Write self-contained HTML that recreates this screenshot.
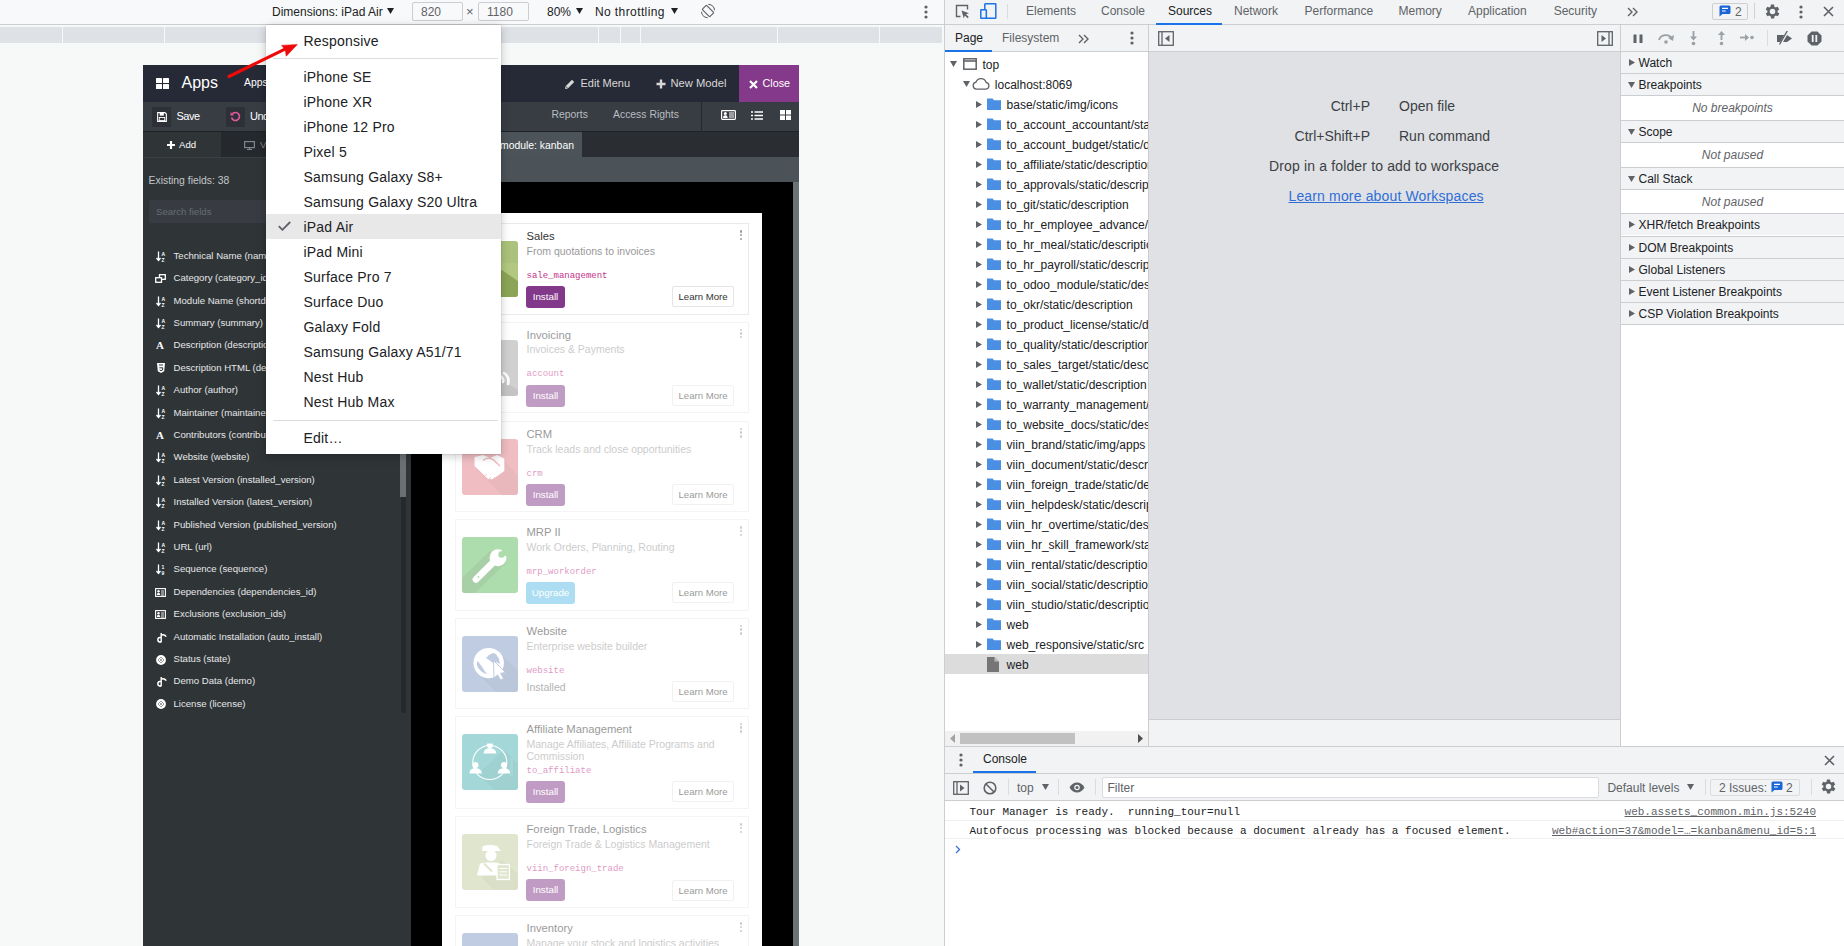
<!DOCTYPE html>
<html><head><meta charset="utf-8">
<style>
*{box-sizing:border-box}
html,body{margin:0;padding:0}
body{width:1844px;height:946px;overflow:hidden;position:relative;font-family:"Liberation Sans",sans-serif;background:#fff}
.a{position:absolute}
.t{position:absolute;white-space:pre;line-height:1}
#dm{left:0;top:0;width:944px;height:946px;background:#f7f8f8;overflow:hidden}
#tb{left:0;top:0;width:944px;height:25px;background:#f8f9fa;border-bottom:1px solid #cbcdd1}
.inp{position:absolute;top:2px;height:19px;border:1px solid #cbcdd1;border-radius:2px;background:#f8f9fa;font-size:12px;line-height:18px;color:#5f6368;padding:0 0 0 8px}
.mq{position:absolute;top:27px;height:16px;background:#dee1e6}
#od{left:143px;top:65px;width:656px;height:881px;background:#000;overflow:hidden}
.fl{font-size:9.6px;color:#e6e7e8}
.card{position:absolute;left:312px;width:294px;height:92px;border:1px solid #eaeaea;background:#fff}
.card .ic{position:absolute;left:6px;top:17px;width:56px;height:56px;border-radius:3px;overflow:hidden}
.card .nm{position:absolute;left:70.5px;top:8px;font-size:11.25px;color:#333;white-space:pre;line-height:1}
.card .sm{position:absolute;left:70.5px;top:23.5px;font-size:10.5px;color:#999;white-space:pre;line-height:1}
.card .mo{position:absolute;left:70.5px;top:48px;font-family:"Liberation Mono",monospace;font-size:9px;color:#c2338a;white-space:pre;line-height:1}
.card .bi{position:absolute;left:70px;top:62px;width:39px;height:22px;border-radius:3px;background:#83398a;color:#fff;font-size:9.8px;line-height:22px;text-align:center}
.card .lm{position:absolute;left:216px;top:62.5px;width:62px;height:21px;border:1px solid #e5e5e5;border-radius:2px;color:#333;font-size:9.6px;line-height:19px;text-align:center}
.card .kb{position:absolute;left:284px;top:6px;width:3px;height:10px}
.card .kb i{position:absolute;left:0;width:2.4px;height:2.4px;border-radius:50%;background:#9a9a9a}
.fd{opacity:.5}
#dt{overflow:hidden}
.dtt{font-size:12px;color:#5f6368}
</style></head>
<body>
<div id="dm" class="a">
  <div id="tb" class="a">
    <div class="t" style="left:272px;top:6px;font-size:12px;color:#202124">Dimensions: iPad Air</div>
    <svg class="a" style="left:386.5px;top:8px" width="7" height="6" viewBox="0 0 7 6"><path d="M0 0h7L3.5 6z" fill="#202124"/></svg>
    <div class="inp" style="left:412px;width:51px">820</div>
    <div class="t" style="left:466px;top:5px;font-size:13px;color:#5f6368">&#215;</div>
    <div class="inp" style="left:478px;width:51px">1180</div>
    <div class="t" style="left:547px;top:6px;font-size:12px;color:#202124">80%</div>
    <svg class="a" style="left:575.5px;top:8px" width="7" height="6" viewBox="0 0 7 6"><path d="M0 0h7L3.5 6z" fill="#202124"/></svg>
    <div class="t" style="left:595px;top:6px;font-size:12px;letter-spacing:0.4px;color:#202124">No throttling</div>
    <svg class="a" style="left:671px;top:8px" width="7" height="6" viewBox="0 0 7 6"><path d="M0 0h7L3.5 6z" fill="#202124"/></svg>
    <svg class="a" style="left:700px;top:3px" width="16" height="16" viewBox="0 0 16 16"><g transform="rotate(-45 8 8)"><rect x="5" y="2.7" width="6" height="10.6" rx="1" stroke="#5f6368" stroke-width="1.2" fill="none"/></g><path d="M8.3 1.2A6.8 6.8 0 0 1 14.6 7.2M7.7 14.8A6.8 6.8 0 0 1 1.4 8.8" stroke="#5f6368" stroke-width="1.1" fill="none"/></svg>
    <svg class="a" style="left:923.5px;top:3.5px" width="4" height="16" viewBox="0 0 4 16"><circle cx="2" cy="3" r="1.6" fill="#5f6368"/><circle cx="2" cy="8" r="1.6" fill="#5f6368"/><circle cx="2" cy="13" r="1.6" fill="#5f6368"/></svg>
  </div>
  <div class="mq" style="left:0;width:62px"></div>
  <div class="mq" style="left:63px;width:101px"></div>
  <div class="mq" style="left:165px;width:433px"></div>
  <div class="mq" style="left:599px;width:21px"></div>
  <div class="mq" style="left:621px;width:19px"></div>
  <div class="mq" style="left:641px;width:136px"></div>
  <div class="mq" style="left:778px;width:101px"></div>
  <div class="mq" style="left:880px;width:62px"></div>

  <div id="od" class="a">
    <!-- header -->
    <div class="a" style="left:0;top:0;width:656px;height:37px;background:#262a36"></div>
    <svg class="a" style="left:13px;top:13px" width="13" height="11" viewBox="0 0 13 11"><rect x="0" y="0" width="6" height="5" rx="0.6" fill="#fff"/><rect x="7" y="0" width="6" height="5" rx="0.6" fill="#fff"/><rect x="0" y="6" width="6" height="5" rx="0.6" fill="#fff"/><rect x="7" y="6" width="6" height="5" rx="0.6" fill="#fff"/></svg>
    <div class="t" style="left:38.5px;top:10.2px;font-size:16px;color:#fff">Apps</div>
    <div class="t" style="left:101px;top:13.2px;font-size:10.4px;color:#fff">Apps</div>
    <svg class="a" style="left:421px;top:14px" width="11" height="11" viewBox="0 0 11 11"><path d="M1 10l0.6-2.8L8 0.8l2.2 2.2-6.4 6.4z" fill="#d8d8d8"/><path d="M1.6 7.2l2.2 2.2" stroke="#262a36" stroke-width="0.8"/></svg>
    <div class="t" style="left:437.5px;top:13px;font-size:11px;color:#d8d8d8">Edit Menu</div>
    <svg class="a" style="left:512.5px;top:14px" width="10" height="10" viewBox="0 0 10 10"><path d="M5 0.5v9M0.5 5h9" stroke="#d8d8d8" stroke-width="2.4"/></svg>
    <div class="t" style="left:527.5px;top:13px;font-size:11.2px;color:#d8d8d8">New Model</div>
    <div class="a" style="left:596px;top:0;width:60px;height:37px;background:#85398a"></div>
    <svg class="a" style="left:605.5px;top:15px" width="9" height="9" viewBox="0 0 9 9"><path d="M1 1l7 7M8 1l-7 7" stroke="#fff" stroke-width="2.2"/></svg>
    <div class="t" style="left:619.5px;top:13px;font-size:10.8px;color:#fff">Close</div>
    <!-- toolbar -->
    <div class="a" style="left:0;top:37px;width:656px;height:30px;background:#383d44"></div>
    <div class="a" style="left:0;top:66px;width:656px;height:1px;background:#1f2226"></div>
    <div class="a" style="left:9px;top:42px;width:19px;height:20px;background:#2d3137"></div>
    <svg class="a" style="left:13.5px;top:47px" width="10" height="10" viewBox="0 0 11 11"><path d="M0.7 0.7h8l1.6 1.6v8H0.7z" stroke="#fff" stroke-width="1.2" fill="none"/><rect x="3" y="1" width="4.5" height="3" fill="#fff"/><rect x="2.5" y="6" width="6" height="3.5" stroke="#fff" stroke-width="1" fill="none"/></svg>
    <div class="t" style="left:33.5px;top:45.5px;font-size:11px;letter-spacing:-0.5px;color:#fff">Save</div>
    <div class="a" style="left:83px;top:42px;width:19px;height:20px;background:#2d3137"></div>
    <svg class="a" style="left:87px;top:46px" width="11" height="11" viewBox="0 0 11 11"><path d="M2.2 3.2A4 4 0 1 1 1.6 6.5" stroke="#e5589e" stroke-width="1.6" fill="none"/><path d="M0.5 1v3.4h3.4z" fill="#e5589e"/></svg>
    <div class="t" style="left:107px;top:45.5px;font-size:11px;letter-spacing:-0.5px;color:#fff">Undo</div>
    <div class="t" style="left:408.5px;top:45px;font-size:10.4px;color:#b9bcc0">Reports</div>
    <div class="t" style="left:470px;top:45px;font-size:10.4px;color:#b9bcc0">Access Rights</div>
    <div class="a" style="left:558px;top:37px;width:1px;height:30px;background:#24272b"></div>
    <svg class="a" style="left:577.5px;top:45px" width="15" height="10" viewBox="0 0 15 10"><rect x="0.6" y="0.6" width="13.8" height="8.8" rx="0.8" stroke="#fff" stroke-width="1.2" fill="none"/><circle cx="4.3" cy="3.6" r="1.5" fill="#fff"/><path d="M2 8c0-2 1-2.7 2.3-2.7S6.6 6 6.6 8z" fill="#fff"/><path d="M8 3h5M8 5h5M8 7h5" stroke="#fff" stroke-width="1"/></svg>
    <svg class="a" style="left:608px;top:46px" width="12" height="9" viewBox="0 0 12 9"><path d="M0 1h2M0 4.5h2M0 8h2M3.5 1H12M3.5 4.5H12M3.5 8H12" stroke="#fff" stroke-width="1.6"/></svg>
    <svg class="a" style="left:637px;top:45px" width="11" height="10" viewBox="0 0 11 10"><rect x="0" y="0" width="5" height="4.5" fill="#fff"/><rect x="6" y="0" width="5" height="4.5" fill="#fff"/><rect x="0" y="5.5" width="5" height="4.5" fill="#fff"/><rect x="6" y="5.5" width="5" height="4.5" fill="#fff"/></svg>
    <!-- sidebar -->
    <div class="a" style="left:0;top:67px;width:268px;height:814px;background:#2f3437"></div>
    <div class="a" style="left:0;top:67px;width:78px;height:25px;background:#2f3437"></div>
    <div class="a" style="left:78px;top:67px;width:190px;height:25px;background:#25282c"></div>
    <div class="a" style="left:0;top:92px;width:268px;height:1px;background:#3b3f44"></div>
    <svg class="a" style="left:24px;top:75.5px" width="8" height="8" viewBox="0 0 8 8"><path d="M4 0v8M0 4h8" stroke="#fff" stroke-width="2.2"/></svg>
    <div class="t" style="left:36px;top:74.5px;font-size:9.6px;color:#fff">Add</div>
    <svg class="a" style="left:101px;top:76px" width="11" height="9" viewBox="0 0 11 9"><rect x="0.6" y="0.6" width="9.8" height="6" stroke="#7f858b" stroke-width="1.2" fill="none"/><path d="M5.5 7v1.5M3 8.5h5" stroke="#7f858b" stroke-width="1.2"/></svg>
    <div class="t" style="left:117px;top:74.5px;font-size:9.6px;color:#7f858b">View</div>
    <div class="t" style="left:5.5px;top:111px;font-size:10.4px;color:#c3c6ca">Existing fields: 38</div>
    <div class="a" style="left:5.5px;top:135px;width:250px;height:23px;background:#383c42;border-radius:2px"></div>
    <div class="t" style="left:13px;top:142px;font-size:9.6px;color:#666c72">Search fields</div>
<div class="a" style="left:13px;top:185.8px;width:240px;height:11px"><svg class="a" style="left:0;top:0" width="10" height="11" viewBox="0 0 10 11"><path d="M2.5 0.5v8.5M0.5 7l2 2.5 2-2.5" stroke="#fff" stroke-width="1.3" fill="none"/><text x="5.5" y="4.5" font-size="5" fill="#fff" font-family="Liberation Sans" font-weight="bold">A</text><text x="5.5" y="10.5" font-size="5" fill="#fff" font-family="Liberation Sans" font-weight="bold">Z</text></svg><div class="t fl" style="left:17.5px;top:0px">Technical Name (name)</div></div>
<div class="a" style="left:13px;top:208.2px;width:240px;height:11px"><svg class="a" style="left:-1px;top:1px" width="11" height="9" viewBox="0 0 11 9"><rect x="4.5" y="0.7" width="5.8" height="4.6" stroke="#fff" stroke-width="1.3" fill="none"/><rect x="0.7" y="3.7" width="5.8" height="4.6" stroke="#fff" stroke-width="1.3" fill="#2f3437"/></svg><div class="t fl" style="left:17.5px;top:0px">Category (category_id)</div></div>
<div class="a" style="left:13px;top:230.6px;width:240px;height:11px"><svg class="a" style="left:0;top:0" width="10" height="11" viewBox="0 0 10 11"><path d="M2.5 0.5v8.5M0.5 7l2 2.5 2-2.5" stroke="#fff" stroke-width="1.3" fill="none"/><text x="5.5" y="4.5" font-size="5" fill="#fff" font-family="Liberation Sans" font-weight="bold">A</text><text x="5.5" y="10.5" font-size="5" fill="#fff" font-family="Liberation Sans" font-weight="bold">Z</text></svg><div class="t fl" style="left:17.5px;top:0px">Module Name (shortdesc)</div></div>
<div class="a" style="left:13px;top:253.0px;width:240px;height:11px"><svg class="a" style="left:0;top:0" width="10" height="11" viewBox="0 0 10 11"><path d="M2.5 0.5v8.5M0.5 7l2 2.5 2-2.5" stroke="#fff" stroke-width="1.3" fill="none"/><text x="5.5" y="4.5" font-size="5" fill="#fff" font-family="Liberation Sans" font-weight="bold">A</text><text x="5.5" y="10.5" font-size="5" fill="#fff" font-family="Liberation Sans" font-weight="bold">Z</text></svg><div class="t fl" style="left:17.5px;top:0px">Summary (summary)</div></div>
<div class="a" style="left:13px;top:275.4px;width:240px;height:11px"><div class="t" style="left:0;top:0;font-family:'Liberation Serif';font-weight:bold;font-size:11px;color:#fff">A</div><div class="t fl" style="left:17.5px;top:0px">Description (description)</div></div>
<div class="a" style="left:13px;top:297.8px;width:240px;height:11px"><svg class="a" style="left:1px;top:0" width="8" height="10" viewBox="0 0 8 10"><path d="M0 0h8l-0.8 8.3L4 10 0.8 8.3z" fill="#fff"/><path d="M2 2h4M2.3 4.8h3.5l-0.3 2.2L4 7.6 2.6 7" stroke="#2f3437" stroke-width="1" fill="none"/></svg><div class="t fl" style="left:17.5px;top:0px">Description HTML (description_html)</div></div>
<div class="a" style="left:13px;top:320.2px;width:240px;height:11px"><svg class="a" style="left:0;top:0" width="10" height="11" viewBox="0 0 10 11"><path d="M2.5 0.5v8.5M0.5 7l2 2.5 2-2.5" stroke="#fff" stroke-width="1.3" fill="none"/><text x="5.5" y="4.5" font-size="5" fill="#fff" font-family="Liberation Sans" font-weight="bold">A</text><text x="5.5" y="10.5" font-size="5" fill="#fff" font-family="Liberation Sans" font-weight="bold">Z</text></svg><div class="t fl" style="left:17.5px;top:0px">Author (author)</div></div>
<div class="a" style="left:13px;top:342.6px;width:240px;height:11px"><svg class="a" style="left:0;top:0" width="10" height="11" viewBox="0 0 10 11"><path d="M2.5 0.5v8.5M0.5 7l2 2.5 2-2.5" stroke="#fff" stroke-width="1.3" fill="none"/><text x="5.5" y="4.5" font-size="5" fill="#fff" font-family="Liberation Sans" font-weight="bold">A</text><text x="5.5" y="10.5" font-size="5" fill="#fff" font-family="Liberation Sans" font-weight="bold">Z</text></svg><div class="t fl" style="left:17.5px;top:0px">Maintainer (maintainer)</div></div>
<div class="a" style="left:13px;top:365.0px;width:240px;height:11px"><div class="t" style="left:0;top:0;font-family:'Liberation Serif';font-weight:bold;font-size:11px;color:#fff">A</div><div class="t fl" style="left:17.5px;top:0px">Contributors (contributors)</div></div>
<div class="a" style="left:13px;top:387.4px;width:240px;height:11px"><svg class="a" style="left:0;top:0" width="10" height="11" viewBox="0 0 10 11"><path d="M2.5 0.5v8.5M0.5 7l2 2.5 2-2.5" stroke="#fff" stroke-width="1.3" fill="none"/><text x="5.5" y="4.5" font-size="5" fill="#fff" font-family="Liberation Sans" font-weight="bold">A</text><text x="5.5" y="10.5" font-size="5" fill="#fff" font-family="Liberation Sans" font-weight="bold">Z</text></svg><div class="t fl" style="left:17.5px;top:0px">Website (website)</div></div>
<div class="a" style="left:13px;top:409.8px;width:240px;height:11px"><svg class="a" style="left:0;top:0" width="10" height="11" viewBox="0 0 10 11"><path d="M2.5 0.5v8.5M0.5 7l2 2.5 2-2.5" stroke="#fff" stroke-width="1.3" fill="none"/><text x="5.5" y="4.5" font-size="5" fill="#fff" font-family="Liberation Sans" font-weight="bold">A</text><text x="5.5" y="10.5" font-size="5" fill="#fff" font-family="Liberation Sans" font-weight="bold">Z</text></svg><div class="t fl" style="left:17.5px;top:0px">Latest Version (installed_version)</div></div>
<div class="a" style="left:13px;top:432.2px;width:240px;height:11px"><svg class="a" style="left:0;top:0" width="10" height="11" viewBox="0 0 10 11"><path d="M2.5 0.5v8.5M0.5 7l2 2.5 2-2.5" stroke="#fff" stroke-width="1.3" fill="none"/><text x="5.5" y="4.5" font-size="5" fill="#fff" font-family="Liberation Sans" font-weight="bold">A</text><text x="5.5" y="10.5" font-size="5" fill="#fff" font-family="Liberation Sans" font-weight="bold">Z</text></svg><div class="t fl" style="left:17.5px;top:0px">Installed Version (latest_version)</div></div>
<div class="a" style="left:13px;top:454.6px;width:240px;height:11px"><svg class="a" style="left:0;top:0" width="10" height="11" viewBox="0 0 10 11"><path d="M2.5 0.5v8.5M0.5 7l2 2.5 2-2.5" stroke="#fff" stroke-width="1.3" fill="none"/><text x="5.5" y="4.5" font-size="5" fill="#fff" font-family="Liberation Sans" font-weight="bold">A</text><text x="5.5" y="10.5" font-size="5" fill="#fff" font-family="Liberation Sans" font-weight="bold">Z</text></svg><div class="t fl" style="left:17.5px;top:0px">Published Version (published_version)</div></div>
<div class="a" style="left:13px;top:477.0px;width:240px;height:11px"><svg class="a" style="left:0;top:0" width="10" height="11" viewBox="0 0 10 11"><path d="M2.5 0.5v8.5M0.5 7l2 2.5 2-2.5" stroke="#fff" stroke-width="1.3" fill="none"/><text x="5.5" y="4.5" font-size="5" fill="#fff" font-family="Liberation Sans" font-weight="bold">A</text><text x="5.5" y="10.5" font-size="5" fill="#fff" font-family="Liberation Sans" font-weight="bold">Z</text></svg><div class="t fl" style="left:17.5px;top:0px">URL (url)</div></div>
<div class="a" style="left:13px;top:499.4px;width:240px;height:11px"><svg class="a" style="left:0;top:0" width="10" height="11" viewBox="0 0 10 11"><path d="M2.5 0.5v8.5M0.5 7l2 2.5 2-2.5" stroke="#fff" stroke-width="1.3" fill="none"/><text x="5.5" y="4.5" font-size="5" fill="#fff" font-family="Liberation Sans" font-weight="bold">1</text><text x="5.5" y="10.5" font-size="5" fill="#fff" font-family="Liberation Sans" font-weight="bold">9</text></svg><div class="t fl" style="left:17.5px;top:0px">Sequence (sequence)</div></div>
<div class="a" style="left:13px;top:521.8px;width:240px;height:11px"><svg class="a" style="left:-1px;top:1px" width="11" height="9" viewBox="0 0 11 9"><rect x="0.6" y="0.6" width="9.8" height="7.8" stroke="#fff" stroke-width="1.1" fill="none"/><circle cx="3.5" cy="3.2" r="1.2" fill="#fff"/><path d="M1.8 7c0-1.6 0.8-2.3 1.7-2.3s1.7 0.7 1.7 2.3z" fill="#fff"/><path d="M6 3h3M6 5h3M6 7h3" stroke="#fff" stroke-width="0.9"/></svg><div class="t fl" style="left:17.5px;top:0px">Dependencies (dependencies_id)</div></div>
<div class="a" style="left:13px;top:544.2px;width:240px;height:11px"><svg class="a" style="left:-1px;top:1px" width="11" height="9" viewBox="0 0 11 9"><rect x="0.6" y="0.6" width="9.8" height="7.8" stroke="#fff" stroke-width="1.1" fill="none"/><circle cx="3.5" cy="3.2" r="1.2" fill="#fff"/><path d="M1.8 7c0-1.6 0.8-2.3 1.7-2.3s1.7 0.7 1.7 2.3z" fill="#fff"/><path d="M6 3h3M6 5h3M6 7h3" stroke="#fff" stroke-width="0.9"/></svg><div class="t fl" style="left:17.5px;top:0px">Exclusions (exclusion_ids)</div></div>
<div class="a" style="left:13px;top:566.6px;width:240px;height:11px"><svg class="a" style="left:1px;top:0" width="10" height="11" viewBox="0 0 10 11"><path d="M4.2 1v9.3M4.2 5.2C1.8 5.2 0.8 6.6 0.8 7.8S1.8 10.3 4.2 10.3" stroke="#fff" stroke-width="1.4" fill="none"/><path d="M4.2 3.2C6 2.4 8 3 9.3 4.6" stroke="#fff" stroke-width="1.5" fill="none"/></svg><div class="t fl" style="left:17.5px;top:0px">Automatic Installation (auto_install)</div></div>
<div class="a" style="left:13px;top:589.0px;width:240px;height:11px"><svg class="a" style="left:-0.5px;top:0.5px" width="10" height="10" viewBox="0 0 10 10"><circle cx="5" cy="5" r="4.9" fill="#fff"/><path d="M2 5l3-3 3 3-3 3z M3.5 3.5l3 3M6.5 3.5l-3 3" stroke="#888" stroke-width="0.8" fill="none"/></svg><div class="t fl" style="left:17.5px;top:0px">Status (state)</div></div>
<div class="a" style="left:13px;top:611.4px;width:240px;height:11px"><svg class="a" style="left:1px;top:0" width="10" height="11" viewBox="0 0 10 11"><path d="M4.2 1v9.3M4.2 5.2C1.8 5.2 0.8 6.6 0.8 7.8S1.8 10.3 4.2 10.3" stroke="#fff" stroke-width="1.4" fill="none"/><path d="M4.2 3.2C6 2.4 8 3 9.3 4.6" stroke="#fff" stroke-width="1.5" fill="none"/></svg><div class="t fl" style="left:17.5px;top:0px">Demo Data (demo)</div></div>
<div class="a" style="left:13px;top:633.8px;width:240px;height:11px"><svg class="a" style="left:-0.5px;top:0.5px" width="10" height="10" viewBox="0 0 10 10"><circle cx="5" cy="5" r="4.9" fill="#fff"/><path d="M2 5l3-3 3 3-3 3z M3.5 3.5l3 3M6.5 3.5l-3 3" stroke="#888" stroke-width="0.8" fill="none"/></svg><div class="t fl" style="left:17.5px;top:0px">License (license)</div></div>
    <div class="a" style="left:257.5px;top:93px;width:5.5px;height:555px;background:#25292c;border-radius:0 0 3px 3px"></div>
    <div class="a" style="left:257px;top:389px;width:6px;height:43px;background:#6a7074"></div>
    <!-- kanban area -->
    <div class="a" style="left:268px;top:67px;width:388px;height:25px;background:#2a2d31"></div>
    <div class="a" style="left:268px;top:67px;width:171px;height:25px;background:#4c545a"></div>
    <div class="t" style="left:357px;top:76px;font-size:10.4px;color:#fff">module: kanban</div>
    <div class="a" style="left:268px;top:92px;width:388px;height:25px;background:#4b5358"></div>
    <div class="a" style="left:650px;top:117px;width:6px;height:764px;background:#6b7276"></div>
    <div class="a" style="left:299px;top:148px;width:320px;height:733px;background:#fff"></div>
<div class="card" style="top:158.2px;height:91.5px"><svg class="ic" width="56" height="56" viewBox="0 0 56 56" style="background:#abc27c"><path d="M0 22L30 22 56 40 56 56 0 56z" fill="#8ca457"/><path d="M30 22L56 40 56 22z" fill="#b2c77f"/><rect x="36" y="11" width="3" height="29" fill="#fff"/></svg><div class="nm" style="top:7.1px">Sales</div><div class="sm" style="top:21.8px">From quotations to invoices</div><div class="mo" style="top:47.8px">sale_management</div><div class="bi" style="top:62px">Install</div><div class="lm" style="top:62.3px">Learn More</div><div class="kb"><i style="top:0"></i><i style="top:3.7px"></i><i style="top:7.4px"></i></div></div>
<div class="card fd" style="top:256.5px;height:91.5px"><svg class="ic" width="56" height="56" viewBox="0 0 56 56" style="background:#a3a3a3"><path d="M24 30L56 50 56 56 30 56z" fill="#8a8a8a"/><path d="M38 36a5 5 0 0 1 3 6M42 33a10 10 0 0 1 4 11" stroke="#fff" stroke-width="2.6" fill="none" stroke-linecap="round"/><circle cx="36" cy="42" r="3" fill="#fff"/></svg><div class="nm" style="top:7.1px">Invoicing</div><div class="sm" style="top:21.8px">Invoices &amp; Payments</div><div class="mo" style="top:47.8px">account</div><div class="bi" style="top:62px">Install</div><div class="lm" style="top:62.3px">Learn More</div><div class="kb"><i style="top:0"></i><i style="top:3.7px"></i><i style="top:7.4px"></i></div></div>
<div class="card fd" style="top:355.8px;height:91.5px"><svg class="ic" width="56" height="56" viewBox="0 0 56 56" style="background:#e07e87"><path d="M14 30L40 56 56 56 56 38 40 18z" fill="#cc6a73" opacity=".55"/><path d="M12.5 18L21 16 28 19 35 16 42.3 19.5 42.3 32 34 38 31 40.3 26 40 12.5 27z" fill="#fff"/><path d="M21 21.5c3-3 7-2.5 10-1l7 6.5" stroke="#e07e87" stroke-width="1.6" fill="none"/><path d="M27 40l2-2M31 40l2-2M23 37l2-2" stroke="#e07e87" stroke-width="0.8"/></svg><div class="nm" style="top:7.1px">CRM</div><div class="sm" style="top:21.8px">Track leads and close opportunities</div><div class="mo" style="top:47.8px">crm</div><div class="bi" style="top:62px">Install</div><div class="lm" style="top:62.3px">Learn More</div><div class="kb"><i style="top:0"></i><i style="top:3.7px"></i><i style="top:7.4px"></i></div></div>
<div class="card fd" style="top:454.2px;height:91.5px"><svg class="ic" width="56" height="56" viewBox="0 0 56 56" style="background:#5dbb5d"><path d="M0 41L28 14 45 25 13 56 0 56z" fill="#4e9a4e" opacity=".75"/><path d="M14 42.3L35 21.5" stroke="#fff" stroke-width="6.8" stroke-linecap="round"/><circle cx="36" cy="20.7" r="8.5" fill="#fff"/><path d="M36.5 19.8L40.5 12.5 46 18.5z" fill="#5dbb5d"/><circle cx="39.5" cy="17.5" r="3.2" fill="#5dbb5d"/><circle cx="16.5" cy="40" r="0.9" fill="#5dbb5d"/></svg><div class="nm" style="top:7.1px">MRP II</div><div class="sm" style="top:21.8px">Work Orders, Planning, Routing</div><div class="mo" style="top:47.8px">mrp_workorder</div><div class="bi" style="top:62px;width:49px;background:#5bbde6">Upgrade</div><div class="lm" style="top:62.3px">Learn More</div><div class="kb"><i style="top:0"></i><i style="top:3.7px"></i><i style="top:7.4px"></i></div></div>
<div class="card fd" style="top:552.8px;height:91.5px"><svg class="ic" width="56" height="56" viewBox="0 0 56 56" style="background:#829bc4"><path d="M20 42L34 56 56 56 56 34 40 20z" fill="#7189b3" opacity=".6"/><circle cx="26.7" cy="27.1" r="15.2" fill="#fff"/><path d="M15 25c3 2 5 6 7 9l3 4c-5-1-9-5-10-9z" fill="#829bc4"/><path d="M24 22l3-3 4-2 3 1 3 5 1 5-4-2-3 1-4-3z" fill="#829bc4"/><path d="M31.5 24.5L43.5 36.5 38.5 37.3 41.5 42.5 38.6 44 35.6 38.8 32 42z" fill="#fff" stroke="#829bc4" stroke-width="1"/></svg><div class="nm" style="top:7.1px">Website</div><div class="sm" style="top:21.8px">Enterprise website builder</div><div class="mo" style="top:47.8px">website</div><div class="t" style="left:70.5px;top:63.7px;font-size:10.5px;color:#666">Installed</div><div class="lm" style="top:62.3px">Learn More</div><div class="kb"><i style="top:0"></i><i style="top:3.7px"></i><i style="top:7.4px"></i></div></div>
<div class="card fd" style="top:650.8px;height:93.5px"><svg class="ic" width="56" height="56" viewBox="0 0 56 56" style="background:#4bb3b3"><path d="M16 40L32 56 56 56 56 30 42 16z" fill="#3c9898" opacity=".55"/><circle cx="27.8" cy="28.5" r="17" stroke="#fff" stroke-width="1.1" fill="none"/><g fill="#fff"><circle cx="27.9" cy="11" r="3.1"/><path d="M21.5 19.5a6.4 5.5 0 0 1 12.8 0z"/><circle cx="13.5" cy="31" r="3.1"/><path d="M7.1 39.5a6.4 5.5 0 0 1 12.8 0z"/><circle cx="42" cy="31" r="3.1"/><path d="M35.6 39.5a6.4 5.5 0 0 1 12.8 0z"/></g><path d="M20 8L36 8M6 24v18M49.5 24v18" stroke="#4bb3b3" stroke-width="3"/></svg><div class="nm" style="top:7.1px">Affiliate Management</div><div class="sm" style="top:21.8px">Manage Affiliates, Affiliate Programs and</div><div class="sm" style="top:33.8px">Commission</div><div class="mo" style="top:49.8px">to_affiliate</div><div class="bi" style="top:64px">Install</div><div class="lm" style="top:64.3px">Learn More</div><div class="kb"><i style="top:0"></i><i style="top:3.7px"></i><i style="top:7.4px"></i></div></div>
<div class="card fd" style="top:751.4px;height:91.5px"><svg class="ic" width="56" height="56" viewBox="0 0 56 56" style="background:#c3cd9f"><path d="M20 44L32 56 56 56 56 40 40 26z" fill="#adb788" opacity=".6"/><g fill="#fff"><path d="M20.5 12.5c3-2 12-2 15 0l3.5 4.5H20z"/><circle cx="29" cy="21.5" r="5.5"/><path d="M15 41.5l3-12c3-1.5 17-1.5 20 0l2 12z"/></g><path d="M22 29.5l8 8" stroke="#c3cd9f" stroke-width="2"/><rect x="35" y="30.5" width="12.4" height="15" fill="#c3cd9f" stroke="#fff" stroke-width="1.3"/><path d="M37.5 34.5h7.5M37.5 37.8h7.5M37.5 41h7.5" stroke="#fff" stroke-width="1"/></svg><div class="nm" style="top:7.1px">Foreign Trade, Logistics</div><div class="sm" style="top:21.8px">Foreign Trade &amp; Logistics Management</div><div class="mo" style="top:47.8px">viin_foreign_trade</div><div class="bi" style="top:62px">Install</div><div class="lm" style="top:62.3px">Learn More</div><div class="kb"><i style="top:0"></i><i style="top:3.7px"></i><i style="top:7.4px"></i></div></div>
<div class="card fd" style="top:850.2px;height:91.5px"><svg class="ic" width="56" height="56" viewBox="0 0 56 56" style="background:#829bc4"><path d="M26 30L56 56 56 30z" fill="#7189b3" opacity=".5"/></svg><div class="nm" style="top:7.1px">Inventory</div><div class="sm" style="top:21.8px">Manage your stock and logistics activities</div><div class="mo" style="top:47.8px">stock</div><div class="bi" style="top:62px">Install</div><div class="lm" style="top:62.3px">Learn More</div><div class="kb"><i style="top:0"></i><i style="top:3.7px"></i><i style="top:7.4px"></i></div></div>
  </div>
</div>
<div class="a" id="dd" style="left:266px;top:25px;width:234.5px;height:428.5px;background:#fff;box-shadow:0 2px 9px 0 rgba(0,0,0,.22),0 0 1px rgba(0,0,0,.3)"><div class="t" style="left:37.5px;top:8.9px;font-size:14px;letter-spacing:0.2px;color:#202124">Responsive</div><div class="a" style="left:7px;top:33px;width:225px;height:1px;background:#dadce0"></div><div class="t" style="left:37.5px;top:44.9px;font-size:14px;letter-spacing:0.2px;color:#202124">iPhone SE</div><div class="t" style="left:37.5px;top:69.9px;font-size:14px;letter-spacing:0.2px;color:#202124">iPhone XR</div><div class="t" style="left:37.5px;top:94.9px;font-size:14px;letter-spacing:0.2px;color:#202124">iPhone 12 Pro</div><div class="t" style="left:37.5px;top:119.9px;font-size:14px;letter-spacing:0.2px;color:#202124">Pixel 5</div><div class="t" style="left:37.5px;top:144.9px;font-size:14px;letter-spacing:0.2px;color:#202124">Samsung Galaxy S8+</div><div class="t" style="left:37.5px;top:169.9px;font-size:14px;letter-spacing:0.2px;color:#202124">Samsung Galaxy S20 Ultra</div><div class="a" style="left:0;top:188.7px;width:234.5px;height:25.3px;background:#e8e8e8"></div><svg class="a" style="left:11.5px;top:196px" width="13" height="10" viewBox="0 0 13 10"><path d="M0.8 5.2l3.6 3.6L12.2 1" stroke="#5f6368" stroke-width="1.8" fill="none"/></svg><div class="t" style="left:37.5px;top:194.9px;font-size:14px;letter-spacing:0.2px;color:#202124">iPad Air</div><div class="t" style="left:37.5px;top:219.9px;font-size:14px;letter-spacing:0.2px;color:#202124">iPad Mini</div><div class="t" style="left:37.5px;top:244.9px;font-size:14px;letter-spacing:0.2px;color:#202124">Surface Pro 7</div><div class="t" style="left:37.5px;top:269.9px;font-size:14px;letter-spacing:0.2px;color:#202124">Surface Duo</div><div class="t" style="left:37.5px;top:294.9px;font-size:14px;letter-spacing:0.2px;color:#202124">Galaxy Fold</div><div class="t" style="left:37.5px;top:319.9px;font-size:14px;letter-spacing:0.2px;color:#202124">Samsung Galaxy A51/71</div><div class="t" style="left:37.5px;top:344.9px;font-size:14px;letter-spacing:0.2px;color:#202124">Nest Hub</div><div class="t" style="left:37.5px;top:369.9px;font-size:14px;letter-spacing:0.2px;color:#202124">Nest Hub Max</div><div class="a" style="left:7px;top:395px;width:225px;height:1px;background:#dadce0"></div><div class="t" style="left:37.5px;top:406.4px;font-size:14px;letter-spacing:0.2px;color:#202124">Edit…</div></div><svg class="a" style="left:0;top:0" width="320" height="100" viewBox="0 0 320 100"><path d="M229 76.5L286 48.6" stroke="#ee0a0a" stroke-width="3.2" stroke-linecap="round"/><path d="M297.3 44.6L281.6 45.4 285.3 49.8 286.2 56.2z" fill="#ee0a0a" stroke="#ee0a0a" stroke-width="0.6" stroke-linejoin="round"/></svg><div id="dt" class="a" style="left:944px;top:0;width:900px;height:946px;background:#fff;overflow:hidden">
<div class="a" style="left:0;top:0;width:1px;height:946px;background:#cbcdd1;z-index:5"></div>
<div class="a" style="left:0;top:0;width:900px;height:25px;background:#f1f3f4;border-bottom:1px solid #cbcdd1"></div>
<svg class="a" style="left:11px;top:4px" width="15" height="15" viewBox="0 0 15 15"><path d="M5.5 12.5H1.5V1.5h11v4" stroke="#5f6368" stroke-width="1.4" fill="none"/><path d="M6.5 6.5l7.5 2.8-3 1 2.8 2.8-1.2 1.2-2.8-2.8-1 3z" fill="#5f6368"/></svg>
<svg class="a" style="left:36px;top:3px" width="17" height="17" viewBox="0 0 17 17"><rect x="4.8" y="0.8" width="11" height="14.5" rx="0.5" stroke="#1a73e8" stroke-width="1.5" fill="none"/><rect x="0.8" y="6.8" width="5.5" height="8.5" rx="0.5" stroke="#1a73e8" stroke-width="1.5" fill="#f1f3f4"/></svg>
<div class="a" style="left:63px;top:4px;width:1px;height:15px;background:#dadce0"></div>
<div class="t" style="left:82.0px;top:4.8px;font-size:12px;color:#5f6368">Elements</div>
<div class="t" style="left:157.0px;top:4.8px;font-size:12px;color:#5f6368">Console</div>
<div class="t" style="left:224.0px;top:4.8px;font-size:12px;color:#202124">Sources</div>
<div class="t" style="left:290.0px;top:4.8px;font-size:12px;color:#5f6368">Network</div>
<div class="t" style="left:360.5px;top:4.8px;font-size:12px;color:#5f6368">Performance</div>
<div class="t" style="left:454.5px;top:4.8px;font-size:12px;color:#5f6368">Memory</div>
<div class="t" style="left:524.0px;top:4.8px;font-size:12px;color:#5f6368">Application</div>
<div class="t" style="left:609.7px;top:4.8px;font-size:12px;color:#5f6368">Security</div>
<div class="a" style="left:212px;top:23px;width:66px;height:2px;background:#1a73e8;z-index:2"></div>
<svg class="a" style="left:683px;top:7px" width="11" height="10" viewBox="0 0 11 10"><path d="M1 1l4 4-4 4M6 1l4 4-4 4" stroke="#5f6368" stroke-width="1.4" fill="none"/></svg>
<div class="a" style="left:768px;top:3px;width:36px;height:17px;border:1px solid #cdcfd3;border-radius:2px"></div>
<svg class="a" style="left:774.5px;top:5px" width="12" height="12" viewBox="0 0 12 12"><path d="M2 0.5h8a1.5 1.5 0 0 1 1.5 1.5v5.5a1.5 1.5 0 0 1-1.5 1.5H3.5L0.5 11.5V2A1.5 1.5 0 0 1 2 0.5z" fill="#1b66d6"/><path d="M3 3.3h6M3 6h3.8" stroke="#fff" stroke-width="1.2"/></svg>
<div class="t" style="left:791px;top:5.8px;font-size:12px;color:#5f6368">2</div>
<div class="a" style="left:810px;top:3px;width:1px;height:16px;background:#cfd1d5"></div>
<svg class="a" style="left:819.3px;top:1.5px" width="19" height="19" viewBox="0 0 24 24"><path fill="#5f6368" d="M19.4 13a7.5 7.5 0 0 0 0-2l2.1-1.6-2-3.5-2.5 1a7.6 7.6 0 0 0-1.7-1L15 3.3h-4l-.4 2.6a7.6 7.6 0 0 0-1.7 1l-2.5-1-2 3.5L6.6 11a7.5 7.5 0 0 0 0 2l-2.1 1.6 2 3.5 2.5-1c.5.4 1.1.7 1.7 1l.4 2.6h4l.4-2.6c.6-.3 1.2-.6 1.7-1l2.5 1 2-3.5zM13 15.5a3.5 3.5 0 1 1 0-7 3.5 3.5 0 0 1 0 7z" transform="translate(-1 0)"/></svg>
<svg class="a" style="left:855px;top:4px" width="4" height="16" viewBox="0 0 4 16"><circle cx="2" cy="3" r="1.6" fill="#5f6368"/><circle cx="2" cy="8" r="1.6" fill="#5f6368"/><circle cx="2" cy="13" r="1.6" fill="#5f6368"/></svg>
<svg class="a" style="left:879px;top:6px" width="11" height="11" viewBox="0 0 11 11"><path d="M1 1l9 9M10 1l-9 9" stroke="#5f6368" stroke-width="1.6"/></svg>
<div class="a" style="left:0;top:25px;width:900px;height:27px;background:#f1f3f4;border-bottom:1px solid #cbcdd1"></div>
<div class="t" style="left:11px;top:31.8px;font-size:12px;color:#202124">Page</div>
<div class="t" style="left:58px;top:31.8px;font-size:12px;color:#5f6368">Filesystem</div>
<div class="a" style="left:1px;top:50px;width:47px;height:2px;background:#1a73e8"></div>
<svg class="a" style="left:134px;top:34px" width="11" height="10" viewBox="0 0 11 10"><path d="M1 1l4 4-4 4M6 1l4 4-4 4" stroke="#5f6368" stroke-width="1.4" fill="none"/></svg>
<svg class="a" style="left:186px;top:30px" width="4" height="16" viewBox="0 0 4 16"><circle cx="2" cy="3" r="1.6" fill="#5f6368"/><circle cx="2" cy="8" r="1.6" fill="#5f6368"/><circle cx="2" cy="13" r="1.6" fill="#5f6368"/></svg>
<div class="a" style="left:204px;top:25px;width:1px;height:721px;background:#cbcdd1;z-index:3"></div>
<svg class="a" style="left:214px;top:31px" width="16" height="15" viewBox="0 0 16 15"><rect x="0.7" y="0.7" width="14.6" height="13.6" stroke="#5f6368" stroke-width="1.3" fill="none"/><path d="M4 1v13" stroke="#5f6368" stroke-width="1.3"/><path d="M11.5 4v7L7 7.5z" fill="#5f6368"/></svg>
<svg class="a" style="left:653px;top:31px" width="16" height="15" viewBox="0 0 16 15"><rect x="0.7" y="0.7" width="14.6" height="13.6" stroke="#5f6368" stroke-width="1.3" fill="none"/><path d="M12 1v13" stroke="#5f6368" stroke-width="1.3"/><path d="M4.5 4v7L9 7.5z" fill="#5f6368"/></svg>
<div class="a" style="left:676px;top:25px;width:1px;height:721px;background:#cbcdd1;z-index:3"></div>
<svg class="a" style="left:689px;top:33.5px" width="10" height="10" viewBox="0 0 10 10"><rect x="0.5" y="0.5" width="3" height="8.5" fill="#5f6368"/><rect x="6.5" y="0.5" width="3" height="8.5" fill="#5f6368"/></svg>
<svg class="a" style="left:713px;top:31px" width="18" height="14" viewBox="0 0 18 14"><path d="M2 9a7 7 0 0 1 13-1" stroke="#9aa0a6" stroke-width="1.8" fill="none"/><path d="M17 4l-1 6-5-3z" fill="#9aa0a6"/><circle cx="9" cy="11" r="1.8" fill="#9aa0a6"/></svg>
<svg class="a" style="left:745px;top:31px" width="9" height="15" viewBox="0 0 9 15"><path d="M4.5 0v8" stroke="#9aa0a6" stroke-width="1.8"/><path d="M1 5.5h7L4.5 9.5z" fill="#9aa0a6"/><circle cx="4.5" cy="12.5" r="1.8" fill="#9aa0a6"/></svg>
<svg class="a" style="left:772.5px;top:31px" width="9" height="15" viewBox="0 0 9 15"><path d="M4.5 3v6" stroke="#9aa0a6" stroke-width="1.8"/><path d="M1 4h7L4.5 0z" fill="#9aa0a6"/><circle cx="4.5" cy="12.5" r="1.8" fill="#9aa0a6"/></svg>
<svg class="a" style="left:796px;top:33px" width="15" height="9" viewBox="0 0 15 9"><path d="M0 4.5h7" stroke="#9aa0a6" stroke-width="1.8"/><path d="M5 1v7l4-3.5z" fill="#9aa0a6"/><circle cx="12" cy="4.5" r="1.8" fill="#9aa0a6"/></svg>
<div class="a" style="left:823px;top:30px;width:1px;height:16px;background:#dadce0"></div>
<svg class="a" style="left:832px;top:31px" width="18" height="14" viewBox="0 0 18 14"><path d="M1 4h10l5 3.5-5 3.5H1z" fill="#5f6368"/><path d="M4 14L12 0" stroke="#f1f3f4" stroke-width="2.4"/><path d="M3.5 13.5L11.5 -0.5" stroke="#5f6368" stroke-width="1.3"/></svg>
<svg class="a" style="left:862.5px;top:31px" width="15" height="15" viewBox="0 0 15 15"><path d="M4.6 0.5h5.8l4.1 4.1v5.8l-4.1 4.1H4.6L0.5 10.4V4.6z" fill="#5f6368"/><rect x="4.8" y="4" width="1.8" height="7" fill="#f1f3f4"/><rect x="8.4" y="4" width="1.8" height="7" fill="#f1f3f4"/></svg>
<div class="a" style="left:1px;top:52px;width:203px;height:679px;overflow:hidden">
<svg class="a" style="left:5px;top:9px" width="7" height="6" viewBox="0 0 7 6"><path d="M0 0h7L3.5 6z" fill="#5f6368"/></svg><svg class="a" style="left:18px;top:6px" width="14" height="12" viewBox="0 0 14 12"><rect x="0.8" y="0.8" width="12.4" height="10.4" stroke="#5f6368" stroke-width="1.5" fill="none"/><path d="M1 3h12" stroke="#5f6368" stroke-width="1.6"/></svg><div class="t" style="left:37.5px;top:6.5px;font-size:12px;color:#202124">top</div>
<svg class="a" style="left:17.5px;top:29px" width="7" height="6" viewBox="0 0 7 6"><path d="M0 0h7L3.5 6z" fill="#5f6368"/></svg><svg class="a" style="left:27px;top:26px" width="18" height="12" viewBox="0 0 18 12"><path d="M4.5 11.2a3.6 3.6 0 0 1-0.5-7.1A5.3 5.3 0 0 1 14 4.3a3.5 3.5 0 0 1 0 6.9z" stroke="#5f6368" stroke-width="1.3" fill="none"/></svg><div class="t" style="left:49.8px;top:26.5px;font-size:12px;color:#202124">localhost:8069</div>
<svg class="a" style="left:30.5px;top:48.5px" width="6" height="7" viewBox="0 0 6 7"><path d="M0 0v7l6-3.5z" fill="#5f6368"/></svg><svg class="a" style="left:42px;top:46px" width="14" height="12" viewBox="0 0 14 12"><path d="M0 0.5h5.5l1.5 1.8H14V12H0z" fill="#4a8fe3"/><path d="M0 3.3h14" stroke="#fff" stroke-width="0" /></svg><div class="t" style="left:61.6px;top:46.5px;font-size:12px;color:#202124">base/static/img/icons</div>
<svg class="a" style="left:30.5px;top:68.5px" width="6" height="7" viewBox="0 0 6 7"><path d="M0 0v7l6-3.5z" fill="#5f6368"/></svg><svg class="a" style="left:42px;top:66px" width="14" height="12" viewBox="0 0 14 12"><path d="M0 0.5h5.5l1.5 1.8H14V12H0z" fill="#4a8fe3"/><path d="M0 3.3h14" stroke="#fff" stroke-width="0" /></svg><div class="t" style="left:61.6px;top:66.5px;font-size:12px;color:#202124">to_account_accountant/static/description</div>
<svg class="a" style="left:30.5px;top:88.5px" width="6" height="7" viewBox="0 0 6 7"><path d="M0 0v7l6-3.5z" fill="#5f6368"/></svg><svg class="a" style="left:42px;top:86px" width="14" height="12" viewBox="0 0 14 12"><path d="M0 0.5h5.5l1.5 1.8H14V12H0z" fill="#4a8fe3"/><path d="M0 3.3h14" stroke="#fff" stroke-width="0" /></svg><div class="t" style="left:61.6px;top:86.5px;font-size:12px;color:#202124">to_account_budget/static/description</div>
<svg class="a" style="left:30.5px;top:108.5px" width="6" height="7" viewBox="0 0 6 7"><path d="M0 0v7l6-3.5z" fill="#5f6368"/></svg><svg class="a" style="left:42px;top:106px" width="14" height="12" viewBox="0 0 14 12"><path d="M0 0.5h5.5l1.5 1.8H14V12H0z" fill="#4a8fe3"/><path d="M0 3.3h14" stroke="#fff" stroke-width="0" /></svg><div class="t" style="left:61.6px;top:106.5px;font-size:12px;color:#202124">to_affiliate/static/description</div>
<svg class="a" style="left:30.5px;top:128.5px" width="6" height="7" viewBox="0 0 6 7"><path d="M0 0v7l6-3.5z" fill="#5f6368"/></svg><svg class="a" style="left:42px;top:126px" width="14" height="12" viewBox="0 0 14 12"><path d="M0 0.5h5.5l1.5 1.8H14V12H0z" fill="#4a8fe3"/><path d="M0 3.3h14" stroke="#fff" stroke-width="0" /></svg><div class="t" style="left:61.6px;top:126.5px;font-size:12px;color:#202124">to_approvals/static/description</div>
<svg class="a" style="left:30.5px;top:148.5px" width="6" height="7" viewBox="0 0 6 7"><path d="M0 0v7l6-3.5z" fill="#5f6368"/></svg><svg class="a" style="left:42px;top:146px" width="14" height="12" viewBox="0 0 14 12"><path d="M0 0.5h5.5l1.5 1.8H14V12H0z" fill="#4a8fe3"/><path d="M0 3.3h14" stroke="#fff" stroke-width="0" /></svg><div class="t" style="left:61.6px;top:146.5px;font-size:12px;color:#202124">to_git/static/description</div>
<svg class="a" style="left:30.5px;top:168.5px" width="6" height="7" viewBox="0 0 6 7"><path d="M0 0v7l6-3.5z" fill="#5f6368"/></svg><svg class="a" style="left:42px;top:166px" width="14" height="12" viewBox="0 0 14 12"><path d="M0 0.5h5.5l1.5 1.8H14V12H0z" fill="#4a8fe3"/><path d="M0 3.3h14" stroke="#fff" stroke-width="0" /></svg><div class="t" style="left:61.6px;top:166.5px;font-size:12px;color:#202124">to_hr_employee_advance/static</div>
<svg class="a" style="left:30.5px;top:188.5px" width="6" height="7" viewBox="0 0 6 7"><path d="M0 0v7l6-3.5z" fill="#5f6368"/></svg><svg class="a" style="left:42px;top:186px" width="14" height="12" viewBox="0 0 14 12"><path d="M0 0.5h5.5l1.5 1.8H14V12H0z" fill="#4a8fe3"/><path d="M0 3.3h14" stroke="#fff" stroke-width="0" /></svg><div class="t" style="left:61.6px;top:186.5px;font-size:12px;color:#202124">to_hr_meal/static/description</div>
<svg class="a" style="left:30.5px;top:208.5px" width="6" height="7" viewBox="0 0 6 7"><path d="M0 0v7l6-3.5z" fill="#5f6368"/></svg><svg class="a" style="left:42px;top:206px" width="14" height="12" viewBox="0 0 14 12"><path d="M0 0.5h5.5l1.5 1.8H14V12H0z" fill="#4a8fe3"/><path d="M0 3.3h14" stroke="#fff" stroke-width="0" /></svg><div class="t" style="left:61.6px;top:206.5px;font-size:12px;color:#202124">to_hr_payroll/static/description</div>
<svg class="a" style="left:30.5px;top:228.5px" width="6" height="7" viewBox="0 0 6 7"><path d="M0 0v7l6-3.5z" fill="#5f6368"/></svg><svg class="a" style="left:42px;top:226px" width="14" height="12" viewBox="0 0 14 12"><path d="M0 0.5h5.5l1.5 1.8H14V12H0z" fill="#4a8fe3"/><path d="M0 3.3h14" stroke="#fff" stroke-width="0" /></svg><div class="t" style="left:61.6px;top:226.5px;font-size:12px;color:#202124">to_odoo_module/static/description</div>
<svg class="a" style="left:30.5px;top:248.5px" width="6" height="7" viewBox="0 0 6 7"><path d="M0 0v7l6-3.5z" fill="#5f6368"/></svg><svg class="a" style="left:42px;top:246px" width="14" height="12" viewBox="0 0 14 12"><path d="M0 0.5h5.5l1.5 1.8H14V12H0z" fill="#4a8fe3"/><path d="M0 3.3h14" stroke="#fff" stroke-width="0" /></svg><div class="t" style="left:61.6px;top:246.5px;font-size:12px;color:#202124">to_okr/static/description</div>
<svg class="a" style="left:30.5px;top:268.5px" width="6" height="7" viewBox="0 0 6 7"><path d="M0 0v7l6-3.5z" fill="#5f6368"/></svg><svg class="a" style="left:42px;top:266px" width="14" height="12" viewBox="0 0 14 12"><path d="M0 0.5h5.5l1.5 1.8H14V12H0z" fill="#4a8fe3"/><path d="M0 3.3h14" stroke="#fff" stroke-width="0" /></svg><div class="t" style="left:61.6px;top:266.5px;font-size:12px;color:#202124">to_product_license/static/description</div>
<svg class="a" style="left:30.5px;top:288.5px" width="6" height="7" viewBox="0 0 6 7"><path d="M0 0v7l6-3.5z" fill="#5f6368"/></svg><svg class="a" style="left:42px;top:286px" width="14" height="12" viewBox="0 0 14 12"><path d="M0 0.5h5.5l1.5 1.8H14V12H0z" fill="#4a8fe3"/><path d="M0 3.3h14" stroke="#fff" stroke-width="0" /></svg><div class="t" style="left:61.6px;top:286.5px;font-size:12px;color:#202124">to_quality/static/description</div>
<svg class="a" style="left:30.5px;top:308.5px" width="6" height="7" viewBox="0 0 6 7"><path d="M0 0v7l6-3.5z" fill="#5f6368"/></svg><svg class="a" style="left:42px;top:306px" width="14" height="12" viewBox="0 0 14 12"><path d="M0 0.5h5.5l1.5 1.8H14V12H0z" fill="#4a8fe3"/><path d="M0 3.3h14" stroke="#fff" stroke-width="0" /></svg><div class="t" style="left:61.6px;top:306.5px;font-size:12px;color:#202124">to_sales_target/static/description</div>
<svg class="a" style="left:30.5px;top:328.5px" width="6" height="7" viewBox="0 0 6 7"><path d="M0 0v7l6-3.5z" fill="#5f6368"/></svg><svg class="a" style="left:42px;top:326px" width="14" height="12" viewBox="0 0 14 12"><path d="M0 0.5h5.5l1.5 1.8H14V12H0z" fill="#4a8fe3"/><path d="M0 3.3h14" stroke="#fff" stroke-width="0" /></svg><div class="t" style="left:61.6px;top:326.5px;font-size:12px;color:#202124">to_wallet/static/description</div>
<svg class="a" style="left:30.5px;top:348.5px" width="6" height="7" viewBox="0 0 6 7"><path d="M0 0v7l6-3.5z" fill="#5f6368"/></svg><svg class="a" style="left:42px;top:346px" width="14" height="12" viewBox="0 0 14 12"><path d="M0 0.5h5.5l1.5 1.8H14V12H0z" fill="#4a8fe3"/><path d="M0 3.3h14" stroke="#fff" stroke-width="0" /></svg><div class="t" style="left:61.6px;top:346.5px;font-size:12px;color:#202124">to_warranty_management/static</div>
<svg class="a" style="left:30.5px;top:368.5px" width="6" height="7" viewBox="0 0 6 7"><path d="M0 0v7l6-3.5z" fill="#5f6368"/></svg><svg class="a" style="left:42px;top:366px" width="14" height="12" viewBox="0 0 14 12"><path d="M0 0.5h5.5l1.5 1.8H14V12H0z" fill="#4a8fe3"/><path d="M0 3.3h14" stroke="#fff" stroke-width="0" /></svg><div class="t" style="left:61.6px;top:366.5px;font-size:12px;color:#202124">to_website_docs/static/description</div>
<svg class="a" style="left:30.5px;top:388.5px" width="6" height="7" viewBox="0 0 6 7"><path d="M0 0v7l6-3.5z" fill="#5f6368"/></svg><svg class="a" style="left:42px;top:386px" width="14" height="12" viewBox="0 0 14 12"><path d="M0 0.5h5.5l1.5 1.8H14V12H0z" fill="#4a8fe3"/><path d="M0 3.3h14" stroke="#fff" stroke-width="0" /></svg><div class="t" style="left:61.6px;top:386.5px;font-size:12px;color:#202124">viin_brand/static/img/apps</div>
<svg class="a" style="left:30.5px;top:408.5px" width="6" height="7" viewBox="0 0 6 7"><path d="M0 0v7l6-3.5z" fill="#5f6368"/></svg><svg class="a" style="left:42px;top:406px" width="14" height="12" viewBox="0 0 14 12"><path d="M0 0.5h5.5l1.5 1.8H14V12H0z" fill="#4a8fe3"/><path d="M0 3.3h14" stroke="#fff" stroke-width="0" /></svg><div class="t" style="left:61.6px;top:406.5px;font-size:12px;color:#202124">viin_document/static/description</div>
<svg class="a" style="left:30.5px;top:428.5px" width="6" height="7" viewBox="0 0 6 7"><path d="M0 0v7l6-3.5z" fill="#5f6368"/></svg><svg class="a" style="left:42px;top:426px" width="14" height="12" viewBox="0 0 14 12"><path d="M0 0.5h5.5l1.5 1.8H14V12H0z" fill="#4a8fe3"/><path d="M0 3.3h14" stroke="#fff" stroke-width="0" /></svg><div class="t" style="left:61.6px;top:426.5px;font-size:12px;color:#202124">viin_foreign_trade/static/description</div>
<svg class="a" style="left:30.5px;top:448.5px" width="6" height="7" viewBox="0 0 6 7"><path d="M0 0v7l6-3.5z" fill="#5f6368"/></svg><svg class="a" style="left:42px;top:446px" width="14" height="12" viewBox="0 0 14 12"><path d="M0 0.5h5.5l1.5 1.8H14V12H0z" fill="#4a8fe3"/><path d="M0 3.3h14" stroke="#fff" stroke-width="0" /></svg><div class="t" style="left:61.6px;top:446.5px;font-size:12px;color:#202124">viin_helpdesk/static/description</div>
<svg class="a" style="left:30.5px;top:468.5px" width="6" height="7" viewBox="0 0 6 7"><path d="M0 0v7l6-3.5z" fill="#5f6368"/></svg><svg class="a" style="left:42px;top:466px" width="14" height="12" viewBox="0 0 14 12"><path d="M0 0.5h5.5l1.5 1.8H14V12H0z" fill="#4a8fe3"/><path d="M0 3.3h14" stroke="#fff" stroke-width="0" /></svg><div class="t" style="left:61.6px;top:466.5px;font-size:12px;color:#202124">viin_hr_overtime/static/description</div>
<svg class="a" style="left:30.5px;top:488.5px" width="6" height="7" viewBox="0 0 6 7"><path d="M0 0v7l6-3.5z" fill="#5f6368"/></svg><svg class="a" style="left:42px;top:486px" width="14" height="12" viewBox="0 0 14 12"><path d="M0 0.5h5.5l1.5 1.8H14V12H0z" fill="#4a8fe3"/><path d="M0 3.3h14" stroke="#fff" stroke-width="0" /></svg><div class="t" style="left:61.6px;top:486.5px;font-size:12px;color:#202124">viin_hr_skill_framework/static</div>
<svg class="a" style="left:30.5px;top:508.5px" width="6" height="7" viewBox="0 0 6 7"><path d="M0 0v7l6-3.5z" fill="#5f6368"/></svg><svg class="a" style="left:42px;top:506px" width="14" height="12" viewBox="0 0 14 12"><path d="M0 0.5h5.5l1.5 1.8H14V12H0z" fill="#4a8fe3"/><path d="M0 3.3h14" stroke="#fff" stroke-width="0" /></svg><div class="t" style="left:61.6px;top:506.5px;font-size:12px;color:#202124">viin_rental/static/description</div>
<svg class="a" style="left:30.5px;top:528.5px" width="6" height="7" viewBox="0 0 6 7"><path d="M0 0v7l6-3.5z" fill="#5f6368"/></svg><svg class="a" style="left:42px;top:526px" width="14" height="12" viewBox="0 0 14 12"><path d="M0 0.5h5.5l1.5 1.8H14V12H0z" fill="#4a8fe3"/><path d="M0 3.3h14" stroke="#fff" stroke-width="0" /></svg><div class="t" style="left:61.6px;top:526.5px;font-size:12px;color:#202124">viin_social/static/description</div>
<svg class="a" style="left:30.5px;top:548.5px" width="6" height="7" viewBox="0 0 6 7"><path d="M0 0v7l6-3.5z" fill="#5f6368"/></svg><svg class="a" style="left:42px;top:546px" width="14" height="12" viewBox="0 0 14 12"><path d="M0 0.5h5.5l1.5 1.8H14V12H0z" fill="#4a8fe3"/><path d="M0 3.3h14" stroke="#fff" stroke-width="0" /></svg><div class="t" style="left:61.6px;top:546.5px;font-size:12px;color:#202124">viin_studio/static/description</div>
<svg class="a" style="left:30.5px;top:568.5px" width="6" height="7" viewBox="0 0 6 7"><path d="M0 0v7l6-3.5z" fill="#5f6368"/></svg><svg class="a" style="left:42px;top:566px" width="14" height="12" viewBox="0 0 14 12"><path d="M0 0.5h5.5l1.5 1.8H14V12H0z" fill="#4a8fe3"/><path d="M0 3.3h14" stroke="#fff" stroke-width="0" /></svg><div class="t" style="left:61.6px;top:566.5px;font-size:12px;color:#202124">web</div>
<svg class="a" style="left:30.5px;top:588.5px" width="6" height="7" viewBox="0 0 6 7"><path d="M0 0v7l6-3.5z" fill="#5f6368"/></svg><svg class="a" style="left:42px;top:586px" width="14" height="12" viewBox="0 0 14 12"><path d="M0 0.5h5.5l1.5 1.8H14V12H0z" fill="#4a8fe3"/><path d="M0 3.3h14" stroke="#fff" stroke-width="0" /></svg><div class="t" style="left:61.6px;top:586.5px;font-size:12px;color:#202124">web_responsive/static/src</div>
<div class="a" style="left:0;top:602px;width:203px;height:20px;background:#dcdcdc"></div><svg class="a" style="left:42px;top:605px" width="12" height="15" viewBox="0 0 12 15"><path d="M0 0h7.5L12 4.5V15H0z" fill="#757575"/><path d="M7.5 0v4.5H12" fill="#bdbdbd"/></svg><div class="t" style="left:61.6px;top:606.5px;font-size:12px;color:#202124">web</div>
</div>
<div class="a" style="left:1px;top:731px;width:203px;height:15px;background:#f1f1f1"></div>
<div class="a" style="left:16px;top:733px;width:115px;height:11px;background:#c1c1c1"></div>
<svg class="a" style="left:6px;top:734px" width="5" height="9" viewBox="0 0 5 9"><path d="M5 0v9L0 4.5z" fill="#a3a3a3"/></svg>
<svg class="a" style="left:194px;top:734px" width="5" height="9" viewBox="0 0 5 9"><path d="M0 0v9l5-4.5z" fill="#505050"/></svg>
<div class="a" style="left:205px;top:52px;width:471px;height:668px;background:#dfe1e5;border-bottom:1px solid #cbcdd1"></div>
<div class="a" style="left:205px;top:720px;width:471px;height:26px;background:#f1f3f4"></div>
<div class="t" style="left:426px;top:99.3px;font-size:14px;color:#3c4043;transform:translateX(-100%)">Ctrl+P</div>
<div class="t" style="left:455px;top:99.3px;font-size:14px;color:#3c4043">Open file</div>
<div class="t" style="left:426px;top:129.1px;font-size:14px;color:#3c4043;transform:translateX(-100%)">Ctrl+Shift+P</div>
<div class="t" style="left:455px;top:129.1px;font-size:14px;color:#3c4043">Run command</div>
<div class="t" style="left:325px;top:158.6px;font-size:14px;letter-spacing:0.15px;color:#3c4043">Drop in a folder to add to workspace</div>
<div class="t" style="left:344.5px;top:188.6px;font-size:14px;letter-spacing:0.15px;color:#306ed6;text-decoration:underline">Learn more about Workspaces</div>
<div class="a" style="left:677px;top:52px;width:223px;height:694px;background:#fff"></div>
<div class="a" style="left:677px;top:51px;width:223px;height:22px;background:#f1f3f4;border-top:1px solid #cbcdd1"></div>
<svg class="a" style="left:684.5px;top:59.0px" width="6" height="7" viewBox="0 0 6 7"><path d="M0 0v7l6-3.5z" fill="#5f6368"/></svg>
<div class="t" style="left:694.5px;top:56.6px;font-size:12px;color:#202124">Watch</div>
<div class="a" style="left:677px;top:73px;width:223px;height:22px;background:#f1f3f4;border-top:1px solid #cbcdd1"></div>
<svg class="a" style="left:683.5px;top:81.5px" width="7" height="6" viewBox="0 0 7 6"><path d="M0 0h7L3.5 6z" fill="#5f6368"/></svg>
<div class="t" style="left:694.5px;top:78.6px;font-size:12px;color:#202124">Breakpoints</div>
<div class="a" style="left:677px;top:95px;width:223px;height:25px;background:#fff;border-top:1px solid #cbcdd1"></div>
<div class="t" style="left:677px;width:223px;text-align:center;top:101.8px;font-size:12px;font-style:italic;color:#5f6368">No breakpoints</div>
<div class="a" style="left:677px;top:120px;width:223px;height:22px;background:#f1f3f4;border-top:1px solid #cbcdd1"></div>
<svg class="a" style="left:683.5px;top:128.5px" width="7" height="6" viewBox="0 0 7 6"><path d="M0 0h7L3.5 6z" fill="#5f6368"/></svg>
<div class="t" style="left:694.5px;top:125.6px;font-size:12px;color:#202124">Scope</div>
<div class="a" style="left:677px;top:142px;width:223px;height:25px;background:#fff;border-top:1px solid #cbcdd1"></div>
<div class="t" style="left:677px;width:223px;text-align:center;top:148.8px;font-size:12px;font-style:italic;color:#5f6368">Not paused</div>
<div class="a" style="left:677px;top:167px;width:223px;height:22px;background:#f1f3f4;border-top:1px solid #cbcdd1"></div>
<svg class="a" style="left:683.5px;top:175.5px" width="7" height="6" viewBox="0 0 7 6"><path d="M0 0h7L3.5 6z" fill="#5f6368"/></svg>
<div class="t" style="left:694.5px;top:172.6px;font-size:12px;color:#202124">Call Stack</div>
<div class="a" style="left:677px;top:189px;width:223px;height:25px;background:#fff;border-top:1px solid #cbcdd1"></div>
<div class="t" style="left:677px;width:223px;text-align:center;top:195.8px;font-size:12px;font-style:italic;color:#5f6368">Not paused</div>
<div class="a" style="left:677px;top:213px;width:223px;height:22px;background:#f1f3f4;border-top:1px solid #cbcdd1"></div>
<svg class="a" style="left:684.5px;top:221.0px" width="6" height="7" viewBox="0 0 6 7"><path d="M0 0v7l6-3.5z" fill="#5f6368"/></svg>
<div class="t" style="left:694.5px;top:218.6px;font-size:12px;color:#202124">XHR/fetch Breakpoints</div>
<div class="a" style="left:677px;top:236px;width:223px;height:22px;background:#f1f3f4;border-top:1px solid #cbcdd1"></div>
<svg class="a" style="left:684.5px;top:244.0px" width="6" height="7" viewBox="0 0 6 7"><path d="M0 0v7l6-3.5z" fill="#5f6368"/></svg>
<div class="t" style="left:694.5px;top:241.6px;font-size:12px;color:#202124">DOM Breakpoints</div>
<div class="a" style="left:677px;top:258px;width:223px;height:22px;background:#f1f3f4;border-top:1px solid #cbcdd1"></div>
<svg class="a" style="left:684.5px;top:266.0px" width="6" height="7" viewBox="0 0 6 7"><path d="M0 0v7l6-3.5z" fill="#5f6368"/></svg>
<div class="t" style="left:694.5px;top:263.6px;font-size:12px;color:#202124">Global Listeners</div>
<div class="a" style="left:677px;top:280px;width:223px;height:22px;background:#f1f3f4;border-top:1px solid #cbcdd1"></div>
<svg class="a" style="left:684.5px;top:288.0px" width="6" height="7" viewBox="0 0 6 7"><path d="M0 0v7l6-3.5z" fill="#5f6368"/></svg>
<div class="t" style="left:694.5px;top:285.6px;font-size:12px;color:#202124">Event Listener Breakpoints</div>
<div class="a" style="left:677px;top:302px;width:223px;height:22px;background:#f1f3f4;border-top:1px solid #cbcdd1"></div>
<svg class="a" style="left:684.5px;top:310.0px" width="6" height="7" viewBox="0 0 6 7"><path d="M0 0v7l6-3.5z" fill="#5f6368"/></svg>
<div class="t" style="left:694.5px;top:307.6px;font-size:12px;color:#202124">CSP Violation Breakpoints</div>
<div class="a" style="left:677px;top:324px;width:223px;height:1px;background:#cbcdd1"></div>
<div class="a" style="left:0;top:746px;width:900px;height:1px;background:#cbcdd1"></div>
<div class="a" style="left:0;top:747px;width:900px;height:27px;background:#f1f3f4;border-bottom:1px solid #cbcdd1"></div>
<svg class="a" style="left:15px;top:752px" width="4" height="16" viewBox="0 0 4 16"><circle cx="2" cy="3" r="1.6" fill="#5f6368"/><circle cx="2" cy="8" r="1.6" fill="#5f6368"/><circle cx="2" cy="13" r="1.6" fill="#5f6368"/></svg>
<div class="t" style="left:39px;top:753.3px;font-size:12px;color:#202124">Console</div>
<div class="a" style="left:29px;top:771px;width:63px;height:2px;background:#1a73e8"></div>
<svg class="a" style="left:880px;top:755px" width="11" height="11" viewBox="0 0 11 11"><path d="M1 1l9 9M10 1l-9 9" stroke="#5f6368" stroke-width="1.6"/></svg>
<div class="a" style="left:0;top:774px;width:900px;height:27px;background:#f1f3f4;border-bottom:1px solid #cbcdd1"></div>
<svg class="a" style="left:9px;top:781px" width="16" height="14" viewBox="0 0 16 14"><rect x="0.7" y="0.7" width="14.6" height="12.6" stroke="#5f6368" stroke-width="1.3" fill="none"/><path d="M4 1v12" stroke="#5f6368" stroke-width="1.3"/><path d="M7 3.5v7l4.5-3.5z" fill="#5f6368"/></svg>
<svg class="a" style="left:38.5px;top:780.5px" width="14" height="14" viewBox="0 0 14 14"><circle cx="7" cy="7" r="5.8" stroke="#5f6368" stroke-width="1.6" fill="none"/><path d="M3 3l8 8" stroke="#5f6368" stroke-width="1.6"/></svg>
<div class="a" style="left:64px;top:779px;width:1px;height:16px;background:#dadce0"></div>
<div class="t" style="left:73px;top:781.8px;font-size:12px;color:#5f6368">top</div>
<svg class="a" style="left:98px;top:784px" width="7" height="6" viewBox="0 0 7 6"><path d="M0 0h7L3.5 6z" fill="#5f6368"/></svg>
<div class="a" style="left:114px;top:779px;width:1px;height:16px;background:#dadce0"></div>
<svg class="a" style="left:125px;top:782px" width="16" height="11" viewBox="0 0 16 11"><path d="M0.5 5.5C2.5 2 5 0.5 8 0.5s5.5 1.5 7.5 5c-2 3.5-4.5 5-7.5 5S2.5 9 0.5 5.5z" fill="#5f6368"/><circle cx="8" cy="5.5" r="2.8" fill="#f1f3f4"/><circle cx="8" cy="5.5" r="1.5" fill="#5f6368"/></svg>
<div class="a" style="left:151px;top:779px;width:1px;height:16px;background:#dadce0"></div>
<div class="a" style="left:158px;top:777px;width:497px;height:21px;background:#fff;border:1px solid #dadce0;border-radius:2px"></div>
<div class="t" style="left:163.5px;top:781.8px;font-size:12px;color:#5f6368">Filter</div>
<div class="t" style="left:663.4000000000001px;top:781.8px;font-size:12px;color:#5f6368">Default levels</div>
<svg class="a" style="left:743px;top:784px" width="7" height="6" viewBox="0 0 7 6"><path d="M0 0h7L3.5 6z" fill="#5f6368"/></svg>
<div class="a" style="left:760.5px;top:779px;width:1px;height:16px;background:#dadce0"></div>
<div class="a" style="left:765.5px;top:779px;width:90px;height:17px;border:1px solid #dadce0;border-radius:2px"></div>
<div class="t" style="left:775px;top:781.8px;font-size:12px;color:#5f6368">2 Issues:</div>
<svg class="a" style="left:827px;top:781px" width="12" height="12" viewBox="0 0 12 12"><path d="M2 0.5h8a1.5 1.5 0 0 1 1.5 1.5v5.5a1.5 1.5 0 0 1-1.5 1.5H3.5L0.5 11.5V2A1.5 1.5 0 0 1 2 0.5z" fill="#1b66d6"/><path d="M3 3.3h6M3 6h3.8" stroke="#fff" stroke-width="1.2"/></svg>
<div class="t" style="left:842px;top:781.8px;font-size:12px;color:#5f6368">2</div>
<div class="a" style="left:866.5px;top:779px;width:1px;height:16px;background:#dadce0"></div>
<svg class="a" style="left:875.3px;top:777.4px" width="19" height="19" viewBox="0 0 24 24"><path fill="#5f6368" d="M19.4 13a7.5 7.5 0 0 0 0-2l2.1-1.6-2-3.5-2.5 1a7.6 7.6 0 0 0-1.7-1L15 3.3h-4l-.4 2.6a7.6 7.6 0 0 0-1.7 1l-2.5-1-2 3.5L6.6 11a7.5 7.5 0 0 0 0 2l-2.1 1.6 2 3.5 2.5-1c.5.4 1.1.7 1.7 1l.4 2.6h4l.4-2.6c.6-.3 1.2-.6 1.7-1l2.5 1 2-3.5zM13 15.5a3.5 3.5 0 1 1 0-7 3.5 3.5 0 0 1 0 7z" transform="translate(-1 0)"/></svg>
<div class="t" style="left:25.399999999999977px;top:807.0px;font-family:'Liberation Mono',monospace;font-size:11px;color:#202124">Tour Manager is ready.  running_tour=null</div>
<div class="t" style="left:872px;top:807.0px;font-family:'Liberation Mono',monospace;font-size:11px;color:#5f6368;text-decoration:underline;transform:translateX(-100%)">web.assets_common.min.js:5240</div>
<div class="a" style="left:1px;top:820px;width:900px;height:1px;background:#f0f0f0"></div>
<div class="t" style="left:25.399999999999977px;top:825.9px;font-family:'Liberation Mono',monospace;font-size:11px;color:#202124">Autofocus processing was blocked because a document already has a focused element.</div>
<div class="t" style="left:872px;top:825.9px;font-family:'Liberation Mono',monospace;font-size:11px;color:#5f6368;text-decoration:underline;transform:translateX(-100%)">web#action=37&amp;model=…=kanban&amp;menu_id=5:1</div>
<div class="a" style="left:1px;top:838px;width:900px;height:1px;background:#f0f0f0"></div>
<svg class="a" style="left:10.5px;top:844.5px" width="6" height="9" viewBox="0 0 6 9"><path d="M1 1l3.5 3.5L1 8" stroke="#3a6fd8" stroke-width="1.3" fill="none"/></svg>
</div>
</body></html>
